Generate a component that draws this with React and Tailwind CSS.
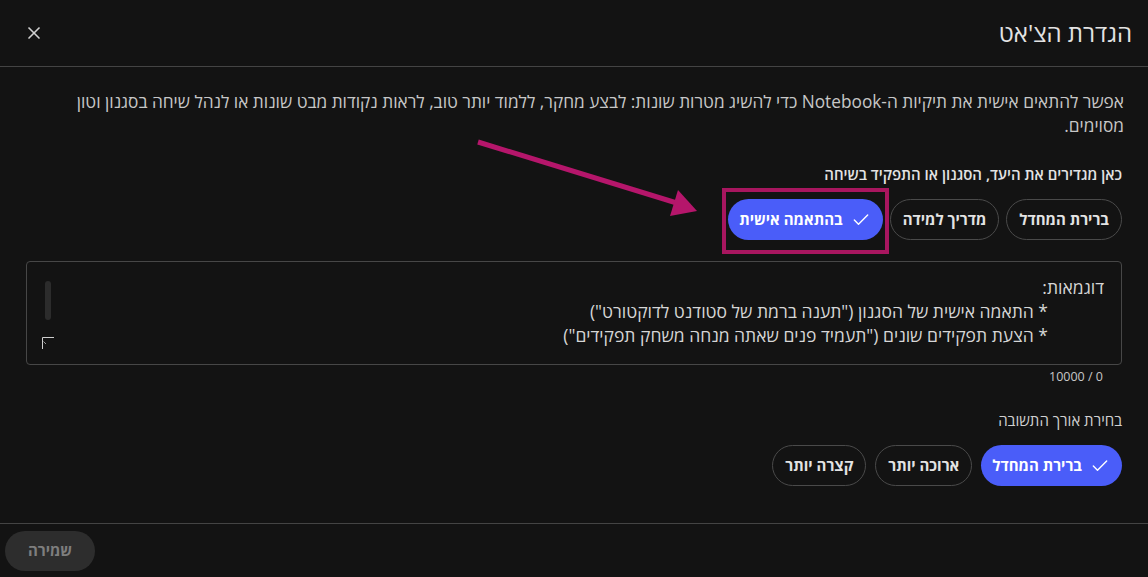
import React, { useState } from 'react';
import { Check, X } from 'lucide-react';

const Chip = ({ label, selected, onClick }) => (
  <button
    onClick={onClick}
    className={
      selected
        ? 'h-[41px] rounded-full bg-[#4a5df9] pr-[12px] pl-[11px] flex items-center gap-[8px] text-[15px] font-bold text-white'
        : 'h-[41px] rounded-full border border-[#4a4a4a] px-[12px] flex items-center text-[15px] font-bold text-[#e3e3e3]'
    }
  >
    {selected && <Check size={20} strokeWidth={1.7} />}
    <span>{label}</span>
  </button>
);

export default function App() {
  const [goal, setGoal] = useState('custom');
  const [length, setLength] = useState('default');

  const goals = [
    { id: 'default', label: 'ברירת המחדל' },
    { id: 'guide', label: 'מדריך למידה' },
    { id: 'custom', label: 'בהתאמה אישית' },
  ];
  const lengths = [
    { id: 'default', label: 'ברירת המחדל' },
    { id: 'long', label: 'ארוכה יותר' },
    { id: 'short', label: 'קצרה יותר' },
  ];

  return (
    <div
      dir="rtl"
      className="relative w-full h-[577px] bg-[#131313] flex flex-col overflow-hidden"
      style={{ fontFamily: '"Open Sans", "Liberation Sans", sans-serif' }}
    >
      {/* כותרת */}
      <div className="h-[67px] shrink-0 flex items-center justify-between pr-[16px] pl-[24px] border-b border-[#444]">
        <h1 className="text-[24px] text-[#e3e3e3] font-normal">הגדרת הצ'אט</h1>
        <X size={20} strokeWidth={2} className="text-[#d0d0d0]" />
      </div>

      {/* תוכן */}
      <div className="flex-1 px-[26px] pt-[23px]">
        <p className="text-[17.25px] leading-[24px] text-[#c7c7c7] ml-[30px] -mr-[2px]">
          אפשר להתאים אישית את תיקיות ה-Notebook כדי להשיג מטרות שונות: לבצע מחקר, ללמוד יותר טוב, לראות נקודות מבט שונות או לנהל שיחה בסגנון וטון מסוימים.
        </p>

        <div className="mt-[26px] text-[15px] leading-[20px] font-semibold text-[#e3e3e3]">
          כאן מגדירים את היעד, הסגנון או התפקיד בשיחה
        </div>
        <div className="mt-[15px] flex gap-[7px]">
          {goals.map((g) => (
            <Chip key={g.id} label={g.label} selected={goal === g.id} onClick={() => setGoal(g.id)} />
          ))}
        </div>

        {/* שדה טקסט */}
        <div className="relative mt-[21px] h-[104px] rounded-[4px] border border-[#474747] pr-[17px] pt-[13px] text-[17.5px] leading-[24px] text-[#d6d6d6]">
          <div>דוגמאות:</div>
          <div className="mr-[56px]">* התאמה אישית של הסגנון ("תענה ברמת של סטודנט לדוקטורט")</div>
          <div className="mr-[56px]">* הצעת תפקידים שונים ("תעמיד פנים שאתה מנחה משחק תפקידים")</div>
          <div className="absolute left-[18px] top-[19px] w-[6px] h-[39px] rounded-full bg-[#2c2c2c]" />
          <svg className="absolute left-[15px] top-[75px]" width="13" height="13" viewBox="0 0 13 13">
            <path d="M0.5 12V0.5H12" fill="none" stroke="#cfcfcf" strokeWidth="1" />
            <path d="M1.5 4.5L4 7" stroke="#9a9a9a" strokeWidth="1" />
          </svg>
        </div>
        <div className="mt-[4px] pr-[19px] text-[12.5px] leading-[16px] text-[#c7c7c7]">0 / 10000</div>

        <div className="mt-[25px] text-[15px] leading-[20px] font-medium text-[#d0d0d0]">
          בחירת אורך התשובה
        </div>
        <div className="mt-[15px] flex gap-[9px]">
          {lengths.map((l) => (
            <Chip key={l.id} label={l.label} selected={length === l.id} onClick={() => setLength(l.id)} />
          ))}
        </div>
      </div>

      {/* תחתית */}
      <div className="h-[54px] shrink-0 border-t border-[#444] flex items-center pl-[5px]">
        <button className="mr-auto h-[40px] w-[90px] rounded-full bg-[#2d2d2d] text-[15px] font-bold text-[#7e7e7e]">
          שמירה
        </button>
      </div>

      {/* סימון: מסגרת וחץ */}
      <div className="absolute left-[722px] top-[188px] w-[167px] h-[66px] border-[4px] border-[#a8165f] pointer-events-none" />
      <svg className="absolute left-0 top-0 pointer-events-none" width="1148" height="577">
        <line x1="478" y1="142" x2="680" y2="204" stroke="#b5166b" strokeWidth="5" />
        <polygon points="697,211 670,216 678,190" fill="#b5166b" />
      </svg>
    </div>
  );
}
